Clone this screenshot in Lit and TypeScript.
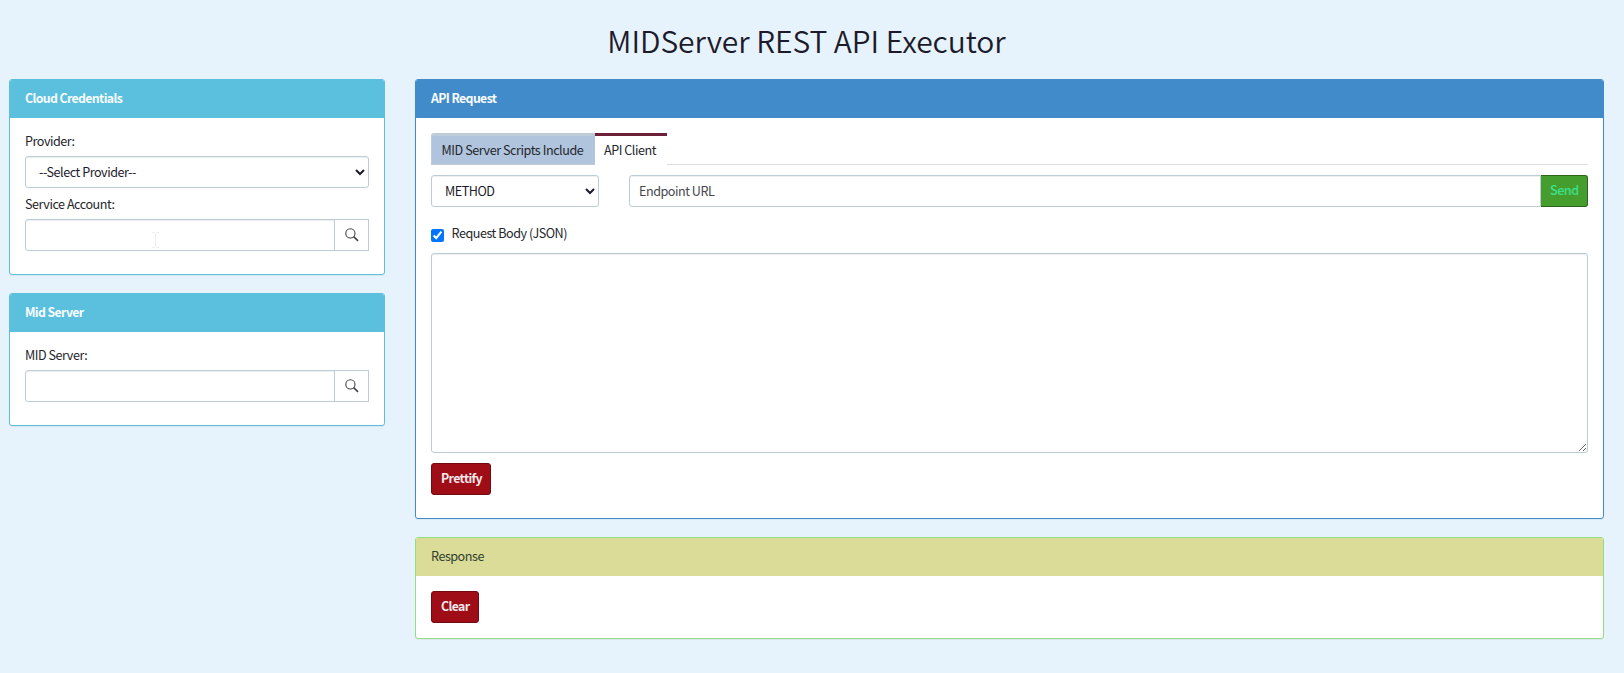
import { LitElement, html, css } from "lit";
import { customElement, property } from "lit/decorators.js";

const controls = css`
  :host { display: block; }
  * { box-sizing: border-box; }
  .control {
    display: block; width: 100%; height: 32px; margin: 0; padding: 0 9px 2px;
    border: 1px solid #bdcdd8; border-radius: 3px; background: #fff; color: #1d1b2b;
    font: inherit; letter-spacing: inherit; outline: none;
    box-shadow: inset 0 1px 1px rgba(0, 0, 0, .07);
  }
  .button {
    height: 32px; padding: 0 9px 2px; margin: 0; border: 1px solid #720a11; border-radius: 3px;
    background: #9f0d17; color: #f3e9ea; font: inherit; font-size: 12.3px; font-weight: 700; letter-spacing: -.6px;
    white-space: nowrap; line-height: 28px;
  }
`;

@customElement("app-panel")
class AppPanel extends LitElement {
  @property() heading = "";
  static styles = css`
    :host { display: block; box-sizing: border-box; border: 1px solid var(--edge); border-radius: 3px;
      background: #fff; box-shadow: 0 1px 1px rgba(0, 0, 0, .05); overflow: hidden; }
    .head { height: 38px; box-sizing: border-box; padding: 0 15px; line-height: var(--line, 37px);
      background: var(--head, var(--edge)); color: var(--ink, #f7fcfe); font-weight: var(--weight, 700);
      font-size: var(--size, 12.3px); letter-spacing: var(--track, -.62px); }
    .body { padding: 15px; }
  `;
  render() {
    return html`<div class="head">${this.heading}</div><div class="body"><slot></slot></div>`;
  }
}

@customElement("lookup-field")
class LookupField extends LitElement {
  @property() label = "";
  static styles = [controls, css`
    .label { display: block; height: 23px; line-height: 15px; }
    .row { display: flex; }
    .entry { flex: 1; width: auto; min-width: 0; border-radius: 3px 0 0 3px; }
    .search { width: 35px; height: 32px; margin-left: -1px; padding: 0; border: 1px solid #bdcdd8;
      background: #fff; display: grid; place-items: center; }
    .icon { display: block; width: 14px; height: 14px; }
  `];
  render() {
    return html`
      <label class="label">${this.label}</label>
      <div class="row">
        <input class="control entry" aria-label=${this.label} />
        <button class="search" aria-label="Search">
          <svg class="icon" viewBox="0 0 14 14" fill="none" stroke="#3f4348">
            <circle cx="5.4" cy="5.4" r="4.6" stroke-width="1.1" />
            <path d="M8.7 8.7 L13 12.8" stroke-width="1.6" />
          </svg>
        </button>
      </div>`;
  }
}

@customElement("app-root")
class AppRoot extends LitElement {
  static styles = [controls, css`
    :host { height: 673px; position: relative; overflow: hidden; background: #e6f3fc; color: #24262b;
      font-family: "Source Sans Pro", "Noto Sans CJK JP", sans-serif; font-size: 12.6px; letter-spacing: -.47px; }
    .title { margin: 0; height: 79px; padding: 18px 20px 0 9px; text-align: center; font-weight: 350;
      font-size: 30px; line-height: 44px; color: #1d1b2b; letter-spacing: -.06px; }
    .columns { display: grid; grid-template-columns: 376px 1189px; column-gap: 30px; padding-left: 9px; align-items: start; }
    .stack { display: grid; gap: 18px; }
    .info { --edge: #5bc0de; }
    .cloud { height: 196px; }
    .mid { height: 133px; }
    .primary { --edge: #428bca; height: 440px; }
    .response { --edge: #93dd80; --head: #dbdc98; --ink: #2f4030; --weight: 400; --size: 12.6px; --line: 35px; --track: -.48px; height: 102px; }
    .label { display: block; height: 23px; line-height: 15px; }
    .provider { margin-bottom: 8px; }
    .tabs { display: flex; height: 32px; border-bottom: 1px solid #ddd; }
    .tab { height: 32px; line-height: 27px; border-top: 3px solid #bdcdd8; white-space: nowrap; }
    .off { width: 164px; padding-left: 9.5px; background: #b0c4de; border-radius: 3px 0 0 0;
      border-left: 1px solid #bdcdd8; border-bottom: 1px solid #bdcdd8; letter-spacing: -.44px; }
    .on { width: 72px; padding-left: 9px; border-top-color: #6d2139; background: #fff; }
    .request { display: flex; margin-top: 10px; }
    .method { width: 168px; margin-right: 30px; }
    .url { flex: 1; width: auto; min-width: 0; border-radius: 3px 0 0 3px; }
    .url::placeholder { color: #46484d; opacity: 1; }
    .send { width: 47px; border-color: #2d651c; border-left: 0; background: #449d2c; color: #3fe08c;
      border-radius: 0 3px 3px 0; font-size: 12.6px; font-weight: 500; letter-spacing: -.5px; }
    .option { display: flex; height: 46px; padding-top: 22px; }
    .check { width: 13px; height: 13px; margin: 0 7.5px 0 0; }
    .caption { line-height: 17px; margin-top: -5px; }
    .json { height: 200px; padding: 6px 9px; }
    .prettify { width: 60px; margin-top: 10px; }
    .clear { width: 48px; }
    .prettify, .clear { display: block; }
    .pointer { position: absolute; left: 152px; top: 232px; width: 7px; height: 16px; pointer-events: none; }
  `];
  render() {
    return html`
      <h1 class="title">MIDServer REST API Executor</h1>
      <div class="columns">
        <div class="stack">
          <app-panel class="info cloud" heading="Cloud Credentials">
            <label class="label">Provider:</label>
            <select class="control provider"><option>--Select Provider--</option></select>
            <lookup-field label="Service Account:"></lookup-field>
          </app-panel>
          <app-panel class="info mid" heading="Mid Server">
            <lookup-field label="MID Server:"></lookup-field>
          </app-panel>
        </div>
        <div class="stack">
          <app-panel class="primary" heading="API Request">
            <div class="tabs">
              <div class="tab off">MID Server Scripts Include</div>
              <div class="tab on">API Client</div>
            </div>
            <div class="request">
              <select class="control method"><option>METHOD</option></select>
              <input class="control url" placeholder="Endpoint URL" />
              <button class="button send">Send</button>
            </div>
            <div class="option">
              <input class="check" type="checkbox" checked />
              <span class="caption">Request Body (JSON)</span>
            </div>
            <textarea class="control json"></textarea>
            <button class="button prettify">Prettify</button>
          </app-panel>
          <app-panel class="response" heading="Response">
            <button class="button clear">Clear</button>
          </app-panel>
        </div>
      </div>
      <svg class="pointer" viewBox="0 0 7 16" fill="none" stroke="#efefef">
        <path d="M0 .5H3M4 .5H7M3.5 1V15M0 15.5H3M4 15.5H7" />
      </svg>`;
  }
}
